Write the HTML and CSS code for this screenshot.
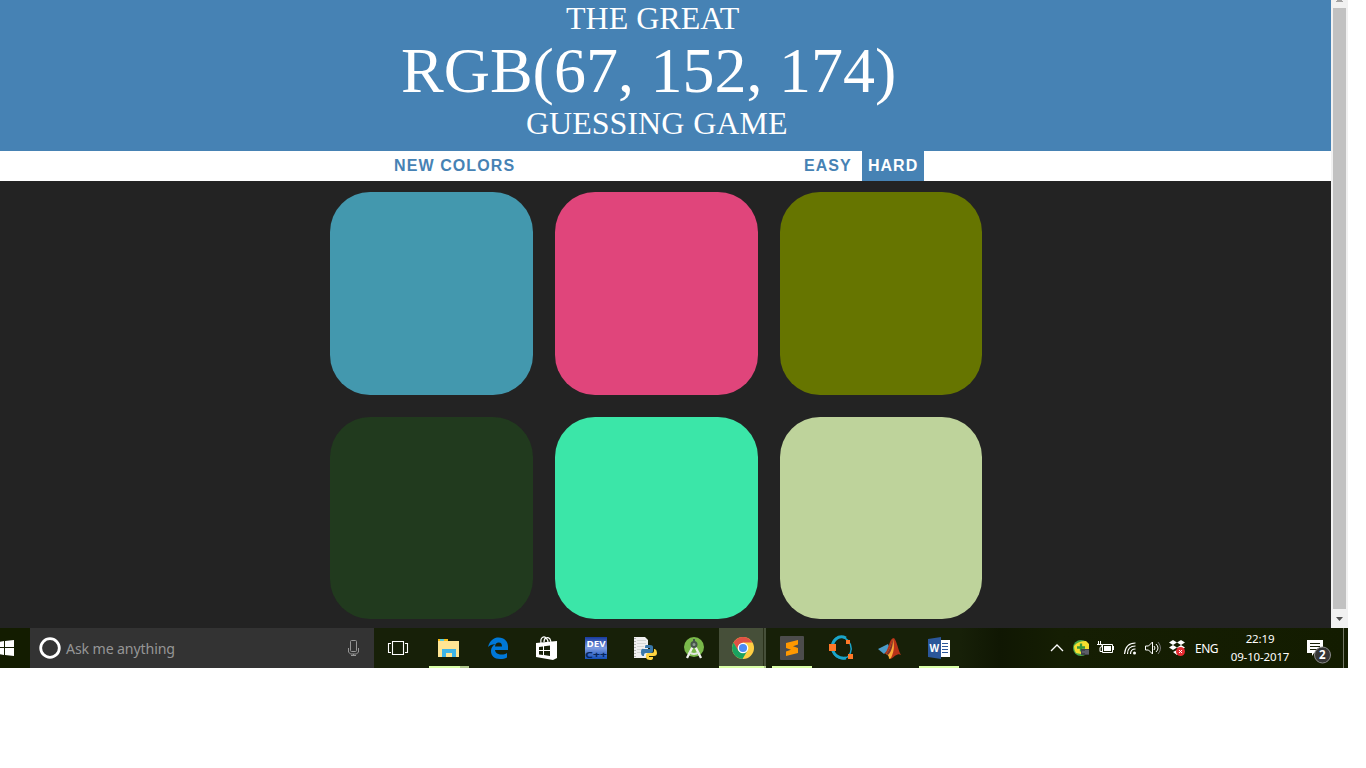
FILE: index.html
```html
<!DOCTYPE html>
<html lang="en">
<head>
<meta charset="utf-8">
<title>Color Game</title>
<link rel="stylesheet" href="styles.css">
</head>
<body>
<div class="desktop">
<div class="browser">
<main class="page">
<h1 class="banner"><span class="line great">THE GREAT</span><span class="line rgb">RGB(67, 152, 174)</span><span class="line guess">GUESSING GAME</span></h1>
<nav class="menu"><button class="new">NEW COLORS</button><button class="easy">EASY</button><button class="hard">HARD</button></nav>
<section class="grid"><div class="square blue"></div><div class="square pink"></div><div class="square olive"></div><div class="square forest"></div><div class="square mint"></div><div class="square sage"></div></section>
</main>
<div class="scrollbar"><svg width="17" height="8"><path d="M6 1V0h5v1zM5 1h7v1H5z" fill="#a3a3a3"/></svg><div class="thumb"></div><svg width="17" height="19"><path d="M5 8h7l-3.500 4z" fill="#505050"/></svg></div>
</div>
<footer class="taskbar">
<div class="start"><svg width="30" height="40"><path d="M-2 14l6-1v6h-6zM5 13l9-1v7H5zM-2 20h6v7l-6-1zM5 20h9v8l-9-1z" fill="#fff"/></svg></div>
<div class="search"><svg width="22" height="24"><circle cx="11" cy="12" r="9.300" fill="none" stroke="#fff" stroke-width="2.800"/></svg><span class="ask">Ask me anything</span>
<svg class="mic" width="13" height="18" fill="none" stroke="#969696"><rect x="3.500" y="1.500" width="6" height="11" rx="1"/><path d="M1.500 9v4l2 2h6l2-2V9M6.500 15v2M4 16.500h5"/></svg></div>
<div class="apps">
<div class="app views"><svg width="24" height="24" fill="none" stroke="#fff" stroke-width="1.100"><path d="M6.500 5.500h11v13h-11zM5 7.500H2.500v9H5M19 7.500h2.500v9H19"/></svg></div>
<div class="app explorer"><svg width="24" height="24"><path d="M1 3h10v2h11v16H1z" fill="#ffe593"/><path d="M1 3h10v2H1z" fill="#f9bd18"/><path d="M3 3h4v2H3z" fill="#55cbd8"/><path d="M5 21v-8h14v8h-4v-4H9v4z" fill="#3eb5e7"/></svg></div>
<div class="app"><svg width="24" height="24"><path d="M2 11C4 4 8 1.500 12.500 1.500c6 0 9.500 4 9.500 9V14H9c.3 3 3 4.500 6.500 4.500 2.200 0 4-.5 5.500-1.500v4.500c-2 1-4 1.500-7 1.500-6 0-9-3.500-9-8 0-3 1.500-5.500 4.500-7-4 .3-6 1.700-7.500 3zM9 10.500h7c0-2.700-1-4-3.300-4C10.500 6.500 9.300 8 9 10.500z" fill="#0078d7"/></svg></div>
<div class="app store"><svg width="24" height="26"><path d="M2 8l21-2v17l-4 2-17-3z" fill="#fff"/><path d="M7 8C6 2 10 1 12 3s2 4 2 4M10 7c0-5 4-5 6-3l1 3" fill="none" stroke="#fff" stroke-width="1.200"/><path d="M5 12l4-.5v3.500H5zM10 11.300l6-.8V15h-6zM5 16h4v4l-4-.5zM10 16h6v5l-6-1z" fill="#172008"/></svg></div>
<div class="app"><svg width="24" height="24"><defs><linearGradient id="dev" x2="0" y2="1"><stop stop-color="#173a9e"/><stop offset=".5" stop-color="#7b9ae0"/><stop offset="1" stop-color="#1550b8"/></linearGradient></defs><path fill="url(#dev)" d="M1 1h22v22H1z"/><text x="2.500" y="10.500" textLength="19" lengthAdjust="spacingAndGlyphs" class="devtext">DEV</text><text x="1" y="22" textLength="22" lengthAdjust="spacingAndGlyphs" class="cpp">C++</text></svg></div>
<div class="app"><svg width="26" height="26"><path d="M2 2h11l3 3v18H2z" fill="#f0f0f0"/><path d="M5 5.500h9M5 8.500h9M5 11.500h7M5 14.500h5M5 17.500h5" stroke="#d5d8d5"/><path d="M3 3v20" stroke="#777" stroke-dasharray="1 2"/><path d="M14 10h4q3 0 3 2v4q0 2-2 2h-5q-2 0-2 2v1h-1q-2 0-2-4t3-3h6v-1h-5v-1q0-2 1-2z" fill="#3977a9"/><path d="M22 14h1q2 1 2 4t-3 3h-5v1h4v1q0 2-3 2t-4-2v-3q0-2 2-2h4q2 0 2-2z" fill="#ffd541"/></svg></div>
<div class="app"><svg width="24" height="26"><circle cx="12" cy="12" r="10" fill="#79b84a"/><path d="M11 11L5 23M13 11l6 12" stroke="#f2f3ef" stroke-width="2.300"/><path d="M7 17q5 4 10 0" fill="none" stroke="#e1e7df" stroke-width="1.800"/><circle cx="12" cy="9.500" r="2.500" fill="#8b9990" stroke="#46564b" stroke-width="2"/><path d="M12 4v3" stroke="#46564b" stroke-width="2"/></svg></div>
<div class="app chrome"><svg width="24" height="24"><circle cx="12" cy="12" r="11" fill="#ffce43"/><path d="M2.500 6.500A11 11 0 0 1 21.500 6.500H12L7 15z" fill="#df5145"/><path d="M2.500 6.500A11 11 0 0 0 11.500 23l5-8.500L7.500 15z" fill="#1aa260"/><circle cx="12" cy="12" r="4.700" fill="#4c8bf5" stroke="#fff" stroke-width="1.300"/></svg></div>
<div class="app sublime"><svg width="24" height="24"><rect width="24" height="24" rx="1" fill="#4c4c4c"/><path d="M6 7l12-3v4.500l-5 1.800 5 1.700v5L6 20v-4.500l5-1.800-5-1.700z" fill="#ff9800"/></svg></div>
<div class="app"><svg width="26" height="26"><g fill="none" stroke="#1aa5ca"><ellipse cx="13.500" cy="13" rx="9.500" ry="11" stroke-width="1.500" transform="rotate(-20 13 13)"/><path d="M18 3C10-1 4 6 4.500 13S11 24 18 23" stroke-width="3"/></g><path d="M1 9h7v7H1zM18 5h4v4h-4zM20 19h5v5h-5z" fill="#ff7828"/></svg></div>
<div class="app"><svg width="26" height="24"><path d="M1 13l6-3 4-2 2 5-6 5z" fill="#4b9bc9"/><path d="M7 18c5-3 5-16 10-16 3 3 4 12 7 17-4-3-7 3-11 4-1-4-3-6-6-5z" fill="#b83218"/><path d="M16 3c1 5 2 11-2 19l-2 1c0-3-1-4-3-5 4-4 5-9 7-15z" fill="#fba936"/><path d="M16 3c0 6-1 12-5 16l-2-1c4-4 5-10 7-15z" fill="#81302a"/></svg></div>
<div class="app word"><svg width="24" height="24"><path d="M12 4h11v17H12z" fill="#fff"/><path d="M15 7.500h6M15 10.500h6M15 13.500h6M15 16.500h6" stroke="#2b579a"/><path d="M1 3l13-2v22L1 21z" fill="#2b579a"/><text x="2.500" y="16" class="wordtext">W</text></svg></div>
</div>
<div class="tray">
<svg width="145" height="40"><path d="M1 23l6-6 6 6" fill="none" stroke="#fff" stroke-width="1.300"/><circle cx="31" cy="20" r="8" fill="#4ba64c"/><path d="M24 18q4-5 12-5l3 3v5l-8 5-5-1q-2-3-2-7z" fill="#f5df2f"/><path d="M27 19.500h8M31 15.500v8" stroke="#35953d" stroke-width="2.300"/><path d="M31 21h8v6h-8z" fill="#40434b"/><path d="M32 24h3M36 22v4M38 22v4" stroke="#777986"/>
<path d="M52.500 16.500h10v8h-10zM63.500 18v4M48.500 13v3M50.500 13v3M47 16.500h5v2l-2 1v4h2" fill="none" stroke="#fff"/><path d="M54 18h7v5h-7z" fill="#fff"/>
<g fill="none" stroke="#fff"><path d="M74.500 26q1-11 11-11M77.500 26q0-8 8-8M80.500 26q0-5 5-5" stroke-width="1.200"/><path d="M95.500 18h3l4-4v12l-4-4h-3zM104 18q2 2 0 4M106 16q4 4 0 8"/><path d="M108 14q5 6 0 12" stroke="#777"/></g><circle cx="84.500" cy="25" r="1.500" fill="#fff"/><path d="M119 14.500l4-2.500 4 2.500-4 2.500zM127 14.500l4-2.500 4 2.500-4 2.500zM119 19.500l4-2.500 4 2.500-4 2.500zM127 19.500l4-2.500 4 2.500-4 2.500zM123 24l4-2 4 2-4 3z" fill="#fff"/><circle cx="130.500" cy="23.500" r="4.500" fill="#e62b32"/><path d="M129 22l3 3m0-3l-3 3" stroke="#fff"/></svg>
<span class="lang">ENG</span><div class="clock"><span>22:19</span><span>09-10-2017</span></div>
<svg class="notice" width="28" height="32"><path d="M2 7h16v13H9l-2 3v-3H2z" fill="#fff"/><path d="M5 10.500h10M5 13.500h10M5 16.500h10" stroke="#172008"/><circle cx="17.500" cy="22" r="8" fill="#353535" stroke="#8b8b8b"/><text x="14" y="26.300" class="count">2</text></svg>
<div class="show"></div></div>
</footer>
</div>
</body>
</html>
```
FILE: styles.css
```css
*{box-sizing:border-box}
body{margin:0;background:#fff;overflow:hidden}
svg{display:block;flex:none}
.desktop{width:1348px}
.browser{display:flex;height:628px}
.page{width:1331px;background:#232323}
.banner{height:151px;margin:0;background:#4682b4;color:#fff;font-family:"Liberation Serif",serif;font-weight:400;font-size:32px;line-height:35px}
.line{display:block;white-space:nowrap}
.great{padding-left:566px;line-height:37px}
.rgb{padding-left:401px;font-size:64px;line-height:68px;word-spacing:.5px}
.guess{padding-left:526px;line-height:37px;word-spacing:1px}
.menu{height:30px;display:flex;background:#fff;padding-left:388px}
.menu button{border:0;padding:0 6px;background:none;color:#4682b4;font:700 16px/28px "Liberation Sans",sans-serif;letter-spacing:1px;text-align:left;white-space:nowrap}
.menu .new{width:410px;letter-spacing:1.1px}
.menu .easy{width:64px}
.menu .hard{width:62px;background:#4682b4;color:#fff}
.grid{display:grid;grid-template-columns:repeat(3,203px);gap:22px;padding:11px 0 0 330px}
.square{height:203px;border-radius:40px}
.square:nth-child(n+4){height:202px}
.blue{background:#4398ae}
.pink{background:#e0457b}
.olive{width:202px;background:#667500}
.forest{background:#213a1e}
.mint{background:#3be6a8}
.sage{width:202px;background:#bed39b}
.scrollbar{width:17px;background:#f1f1f1}
.thumb{width:13px;height:601px;margin:0 2px;background:#c1c1c1}
.taskbar{height:40px;display:flex;background:linear-gradient(90deg,#172008 960px,#101703 1000px,#151e03 1060px,#131c00);font-family:"Noto Sans",sans-serif}
.start{width:30px;background:#131c00}
.search{width:344px;background:#333;display:flex;align-items:center;padding:0 14px 0 9px}
.ask{color:#969696;font-size:14.2px;letter-spacing:-.15px;margin-left:5px;white-space:nowrap}
.mic{margin-left:auto}
.apps{display:flex}
.app{width:49px;height:40px;display:flex;align-items:center;justify-content:center;padding-left:2px}
.views{padding:0 1px 0 0}
.store{padding-left:0}
.explorer,.sublime,.word{background:linear-gradient(#d9ffa6,#d9ffa6) 6px 38px/40px 2px no-repeat}
.explorer{background:linear-gradient(90deg,#d9ffa6 31px,#afc88b 31px) 6px 38px/40px 2px no-repeat}
.chrome{background:linear-gradient(90deg,#d9ffa6 45px,#afc88b 45px) 2px 38px/48px 2px no-repeat,linear-gradient(90deg,#464f39 44px,#293019 44px,#293019 45px,#464f39 45px) 2px 0/48px 40px no-repeat}
.tray{margin-left:auto;display:flex;align-items:center;color:#fff;font-size:12px;width:298px}
.lang{width:35px;font-size:12px;letter-spacing:-.5px}
.clock{width:60px;display:flex;flex-direction:column;align-items:center;line-height:18px;white-space:nowrap;font-size:11.5px;letter-spacing:-.15px}
.notice{margin:1px 0 0 15px}
.show{width:1px;height:40px;background:#727765;margin-left:auto;margin-right:4px}
.devtext,.cpp,.wordtext,.count{font-family:"Noto Sans",sans-serif;font-weight:700;fill:#fff}
.devtext{font-size:9px}
.cpp{font-size:9.5px;fill:#06265d}
.wordtext{font-size:10px}
.count{font-size:11.5px}
```
